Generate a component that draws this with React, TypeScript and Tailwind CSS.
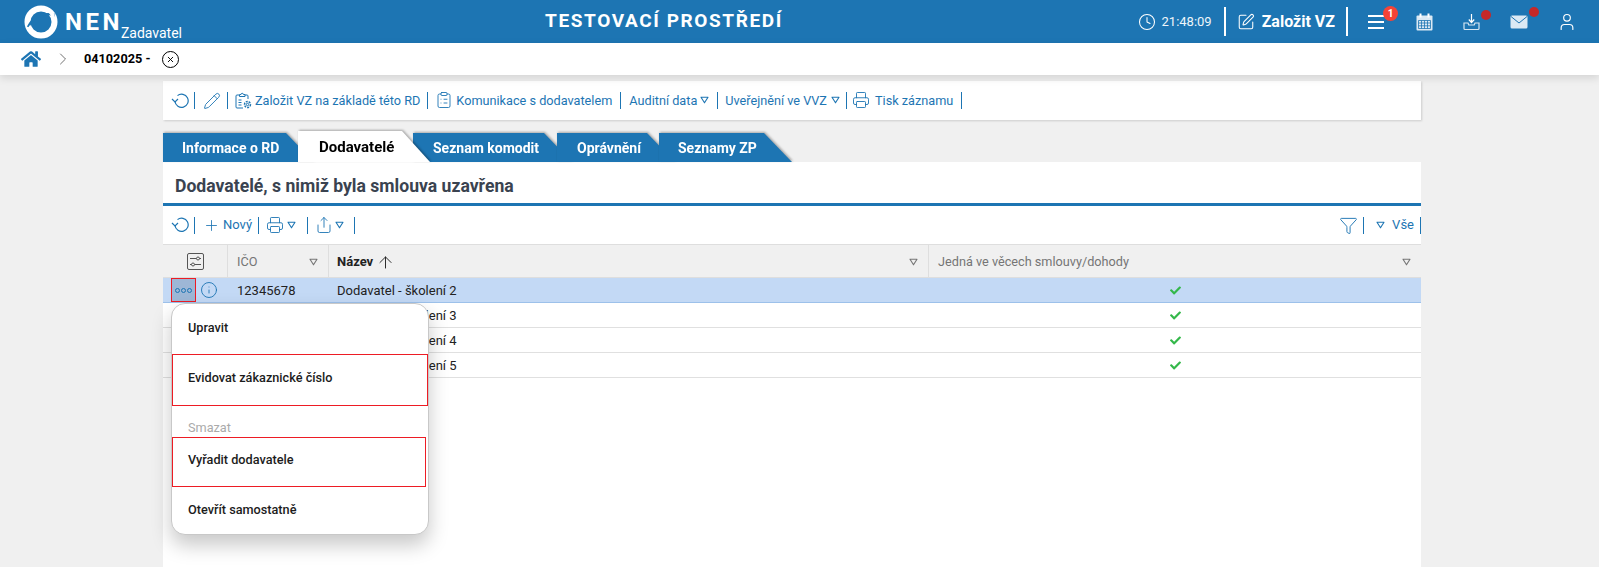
import { useState } from "react";
import {
  Clock,
  SquarePen,
  ChevronRight,
  Pencil,
  ClipboardList,
  Printer,
  Plus,
  Share,
  Funnel,
  ArrowUp,
  Info,
  User,
  X,
} from "lucide-react";
import { FaHome, FaCheck } from "react-icons/fa";

const tabs = [
  { name: "Informace o RD", outer: "w-[151px] z-[1]", inner: "pl-[19px]" },
  { name: "Dodavatelé", outer: "w-[132px] -ml-[16px] z-[5]", inner: "pl-[21px]", active: true },
  { name: "Seznam komodit", outer: "w-[159px] -ml-[17px] z-[2]", inner: "pl-[20px]" },
  { name: "Oprávnění", outer: "w-[118px] -ml-[15px] z-[3]", inner: "pl-[20px]" },
  { name: "Seznamy ZP", outer: "w-[133px] -ml-[16px] z-[4]", inner: "pl-[19px]" },
];

const rows = ["2", "3", "4", "5"];

function Caret({ className = "" }: { className?: string }) {
  return (
    <svg width="9" height="8" viewBox="0 0 9 8" fill="none" className={className}>
      <path d="M1 1.2h7L4.5 6.8z" stroke="currentColor" strokeWidth="1.1" strokeLinejoin="round" />
    </svg>
  );
}

function Sep({ className = "" }: { className?: string }) {
  return <span className={`h-[17px] w-px bg-[#1d75b3] ${className}`} />;
}

function Logo() {
  return (
    <svg width="34" height="34" viewBox="0 0 34 34" fill="none">
      <circle cx="17" cy="17" r="13.5" stroke="#fff" strokeWidth="6" />
      <path d="M4 22C9 12 18 7 31 10" stroke="#1d75b3" strokeWidth="2.4" fill="none" />
      <path d="M3 24C7 31 16 34 24 30C14 31 8 28 6 20z" fill="#fff" />
      <path d="M31 10C27 3 18 0 10 4C20 3 26 6 28 14z" fill="#fff" />
    </svg>
  );
}

function Refresh() {
  return (
    <svg width="18" height="18" viewBox="0 0 18 18" fill="none" stroke="#1d75b3" strokeWidth="1.2">
      <path d="M4 9.5A6.6 6.6 0 1 0 6.5 3.6" />
      <path d="M1 7l3 3 3-3" />
    </svg>
  );
}

function Sliders() {
  return (
    <svg width="17" height="17" viewBox="0 0 17 17" fill="none" stroke="#555" strokeWidth="1">
      <rect x="0.5" y="0.5" width="16" height="16" rx="1.5" />
      <path d="M3 5.5h6.5M12.5 5.5H14M3 11.5h1.5M7.5 11.5H14" />
      <circle cx="11" cy="5.5" r="1.5" />
      <circle cx="6" cy="11.5" r="1.5" />
    </svg>
  );
}

function CalendarIcon() {
  return (
    <svg width="17" height="18" viewBox="0 0 17 18" fill="none">
      <rect x="0.5" y="2.5" width="16" height="15" rx="1" fill="#dbe9f4" />
      <rect x="3.5" y="0.5" width="2" height="4" fill="#fff" />
      <rect x="11.5" y="0.5" width="2" height="4" fill="#fff" />
      <path d="M2.5 7.5h12v8h-12zM2.5 10h12M2.5 12.8h12M5.5 7.5v8M8.5 7.5v8M11.5 7.5v8" stroke="#1d75b3" strokeWidth="0.8" />
    </svg>
  );
}

function InboxIcon() {
  return (
    <svg width="17" height="18" viewBox="0 0 17 18" fill="none" stroke="#fff" strokeWidth="1.2">
      <path d="M8.5 1v8M5.8 6.5l2.7 3 2.7-3" />
      <path d="M1 10v5.5a1 1 0 0 0 1 1h13a1 1 0 0 0 1-1V10h-4l-.8 2H5.8L5 10z" stroke="#d6e6f2" />
    </svg>
  );
}

function MailIcon() {
  return (
    <svg width="18" height="14" viewBox="0 0 18 14" fill="none">
      <rect x="0.5" y="0.5" width="17" height="13" rx="1.5" fill="#dbe9f4" />
      <path d="M1 1.5 9 8l8-6.5" stroke="#1d75b3" strokeWidth="1" />
    </svg>
  );
}

function BuildIcon() {
  return (
    <svg width="17" height="17" viewBox="0 0 17 17" fill="none" stroke="#1d75b3" strokeWidth="1">
      <path d="M8 16H2a1 1 0 0 1-1-1V4a1 1 0 0 1 1-1h2M10 3h2a1 1 0 0 1 1 1v3" />
      <path d="M4.5 4.5V2.5h1.5a1.2 1.2 0 0 1 2.4 0H10v2z" />
      <path d="M3.5 8h3M3.5 10.5h3M3.5 13h3" />
      <circle cx="12.5" cy="12.5" r="1.2" />
      <circle cx="12.5" cy="12.5" r="3" strokeDasharray="2 1" strokeWidth="1.4" />
    </svg>
  );
}

export default function App() {
  const [selected] = useState(0);

  return (
    <div className="relative h-[567px] overflow-hidden bg-[#f0f0f0] font-['Roboto',sans-serif] text-[13px]">
      {/* top bar */}
      <header className="relative flex h-[43px] items-center bg-[#1d75b3] text-white">
        <div className="flex w-[400px] items-center pl-[24px]">
          <Logo />
          <span className="ml-[7px] text-[24px] leading-none font-bold tracking-[3.5px]">NEN</span>
          <span className="mt-[22px] -ml-[2px] text-[14px] leading-none">Zadavatel</span>
        </div>
        <div className="w-[528px] text-center text-[19px] font-bold tracking-[1.6px]">TESTOVACÍ PROSTŘEDÍ</div>
        <div className="ml-auto flex items-center">
          <Clock size={18} strokeWidth={1.4} className="mr-[6px]" />
          <span className="text-[13px] text-[#eef5fa]">21:48:09</span>
          <span className="ml-[12px] h-[29px] w-[2px] bg-white" />
          <SquarePen size={18} strokeWidth={1.4} className="ml-[11px]" />
          <span className="ml-[7px] text-[16px] font-bold">Založit VZ</span>
          <span className="ml-[11px] h-[29px] w-[2px] bg-white" />
          <div className="relative ml-[20px] flex h-[14px] w-[16px] flex-col justify-between">
            <i className="h-[2px] bg-white" />
            <i className="h-[2px] bg-white" />
            <i className="h-[2px] bg-white" />
            <span className="absolute -top-[9px] left-[15px] flex h-[15px] w-[15px] items-center justify-center rounded-full bg-[#f44336] text-[10px] font-bold">
              1
            </span>
          </div>
          <div className="ml-[32px]">
            <CalendarIcon />
          </div>
          <div className="relative ml-[30px]">
            <InboxIcon />
            <span className="absolute -top-[3px] left-[18px] h-[10px] w-[10px] rounded-full bg-[#c62828]" />
          </div>
          <div className="relative ml-[30px]">
            <MailIcon />
            <span className="absolute -top-[8px] left-[19px] h-[10px] w-[10px] rounded-full bg-[#c62828]" />
          </div>
          <User size={20} strokeWidth={1.4} className="mr-[22px] ml-[29px]" />
        </div>
      </header>

      {/* breadcrumb */}
      <nav className="relative z-10 flex h-[32px] items-center bg-white pl-[21px] shadow-[0_3px_8px_rgba(0,0,0,0.12)]">
        <FaHome size={20} className="text-[#1d75b3]" />
        <ChevronRight size={20} strokeWidth={1} className="ml-[12px] text-[#555]" />
        <span className="ml-[11px] text-[12.7px] font-bold text-black">04102025 -</span>
        <span className="ml-[12px] flex h-[17px] w-[17px] items-center justify-center rounded-full border-[1.5px] border-black">
          <X size={9} strokeWidth={2.5} className="text-black" />
        </span>
      </nav>

      <main className="ml-[163px] w-[1258px]">
        {/* record actions */}
        <div className="mt-[6px] flex h-[39px] items-center bg-white pl-[8px] text-[12.7px] text-[#1d75b3] shadow-[1px_1px_2px_rgba(0,0,0,0.15)]">
          <Refresh />
          <Sep className="ml-[5px]" />
          <Pencil size={18} strokeWidth={1.2} className="ml-[8px]" />
          <Sep className="ml-[6px]" />
          <span className="ml-[7px] flex items-center gap-[3px]">
            <BuildIcon />
            Založit VZ na základě této RD
          </span>
          <Sep className="ml-[7px]" />
          <span className="ml-[7px] flex items-center gap-[3px]">
            <ClipboardList size={18} strokeWidth={1.2} />
            Komunikace s dodavatelem
          </span>
          <Sep className="ml-[8px]" />
          <span className="ml-[8px] flex items-center gap-[3px]">
            Auditní data <Caret />
          </span>
          <Sep className="ml-[8px]" />
          <span className="ml-[7px] flex items-center gap-[4px]">
            Uveřejnění ve VVZ <Caret />
          </span>
          <Sep className="ml-[6px]" />
          <span className="ml-[5px] flex items-center gap-[5px]">
            <Printer size={18} strokeWidth={1.2} />
            Tisk záznamu
          </span>
          <Sep className="ml-[8px]" />
        </div>

        {/* tabs */}
        <div className="mt-[11px] flex h-[31px] items-end">
          {tabs.map((tab) => (
            <div key={tab.name} className={`relative drop-shadow-[1px_-1px_1px_rgba(0,0,0,0.3)] ${tab.outer}`}>
              <div
                className={`flex items-center pt-[1px] font-bold [clip-path:polygon(0_0,calc(100%-28px)_0,100%_100%,0_100%)] ${tab.inner} ${
                  tab.active ? "h-[31px] bg-white text-[15px] text-black" : "h-[29px] bg-[#1d75b3] text-[14px] text-white"
                }`}
              >
                {tab.name}
              </div>
            </div>
          ))}
        </div>

        {/* panel */}
        <section className="h-[405px] bg-white">
          <h2 className="box-content flex h-[32px] items-center border-b-[3px] border-[#1d75b3] pt-[9px] pl-[12px] text-[17.6px] leading-none font-bold text-[#3a4350]">
            Dodavatelé, s nimiž byla smlouva uzavřena
          </h2>
          <div className="flex h-[38px] items-center pl-[8px] text-[#1d75b3]">
            <Refresh />
            <Sep className="ml-[5px]" />
            <Plus size={17} strokeWidth={1.2} className="ml-[8px]" />
            <span className="ml-[3px]">Nový</span>
            <Sep className="ml-[6px]" />
            <Printer size={18} strokeWidth={1.2} className="ml-[7px]" />
            <Caret className="ml-[3px]" />
            <Sep className="ml-[11px]" />
            <Share size={18} strokeWidth={1.2} className="ml-[7px]" />
            <Caret className="ml-[2px]" />
            <Sep className="ml-[10px]" />
            <Funnel size={19} strokeWidth={1.2} className="ml-auto" />
            <Sep className="ml-[5px]" />
            <Caret className="ml-[12px]" />
            <span className="ml-[7px]">Vše</span>
            <Sep className="ml-[6px]" />
          </div>

          <div className="border-t border-[#dedede]">
            <div className="grid h-[33px] grid-cols-[65px_101px_600px_1fr] border-b border-[#dedede] bg-[#f0f0f0] text-[12.7px] text-[#757575]">
              <div className="flex items-center justify-center border-r border-[#dedede]">
                <Sliders />
              </div>
              <div className="flex items-center justify-between border-r border-[#dedede] pt-[2px] pr-[10px] pl-[9px]">
                IČO <Caret />
              </div>
              <div className="flex items-center border-r border-[#dedede] pt-[2px] pr-[10px] pl-[8px]">
                <span className="text-[13px] font-bold text-[#222]">Název</span>
                <ArrowUp size={19} strokeWidth={1.2} className="ml-[3px] text-[#222]" />
                <Caret className="ml-auto" />
              </div>
              <div className="flex items-center justify-between pt-[2px] pr-[10px] pl-[9px]">
                Jedná ve věcech smlouvy/dohody <Caret />
              </div>
            </div>

            {rows.map((row, index) => (
              <div
                key={row}
                className={`grid h-[25px] grid-cols-[65px_101px_600px_1fr] items-center border-b text-[#222] ${
                  index === selected ? "border-[#9dc1ea] bg-[#c3d9f5]" : "border-[#e0e0e0]"
                }`}
              >
                <div className="flex items-center pl-[8px]">
                  {index === selected && (
                    <>
                      <span className="flex h-[24px] w-[25px] items-center justify-center gap-[1px] border border-[#ed1c24] bg-[#9db7d6]">
                        <i className="h-[5px] w-[5px] rounded-full border border-[#1d75b3]" />
                        <i className="h-[5px] w-[5px] rounded-full border border-[#1d75b3]" />
                        <i className="h-[5px] w-[5px] rounded-full border border-[#1d75b3]" />
                      </span>
                      <Info size={18} strokeWidth={1.2} className="ml-[4px] text-[#1d75b3]" />
                    </>
                  )}
                </div>
                <div className="pt-[2px] pl-[9px]">12345678</div>
                <div className="pt-[2px] pl-[8px]">Dodavatel - školení {row}</div>
                <div className="flex justify-center">
                  <FaCheck size={11} className="text-[#34b84a]" />
                </div>
              </div>
            ))}
          </div>
        </section>
      </main>

      {/* row action menu */}
      <div className="absolute top-[303px] left-[171px] z-20 w-[258px] rounded-[14px] border border-[#c8c8c8] bg-white text-[12.7px] font-medium text-[#1c1c1c] shadow-[0_10px_20px_rgba(0,0,0,0.22)]">
        <div className="h-[50px] pt-[15px] pl-[16px] leading-[18px]">Upravit</div>
        <div className="h-[52px] border border-[#ed1c24] pt-[14px] pl-[15px] leading-[18px]">Evidovat zákaznické číslo</div>
        <div className="h-[31px] pt-[13px] pl-[16px] leading-[18px] font-normal text-[#aaa]">Smazat</div>
        <div className="mr-[2px] h-[50px] border border-[#ed1c24] pt-[13px] pl-[15px] leading-[18px]">Vyřadit dodavatele</div>
        <div className="h-[47px] pt-[14px] pl-[16px] leading-[18px]">Otevřít samostatně</div>
      </div>
    </div>
  );
}
